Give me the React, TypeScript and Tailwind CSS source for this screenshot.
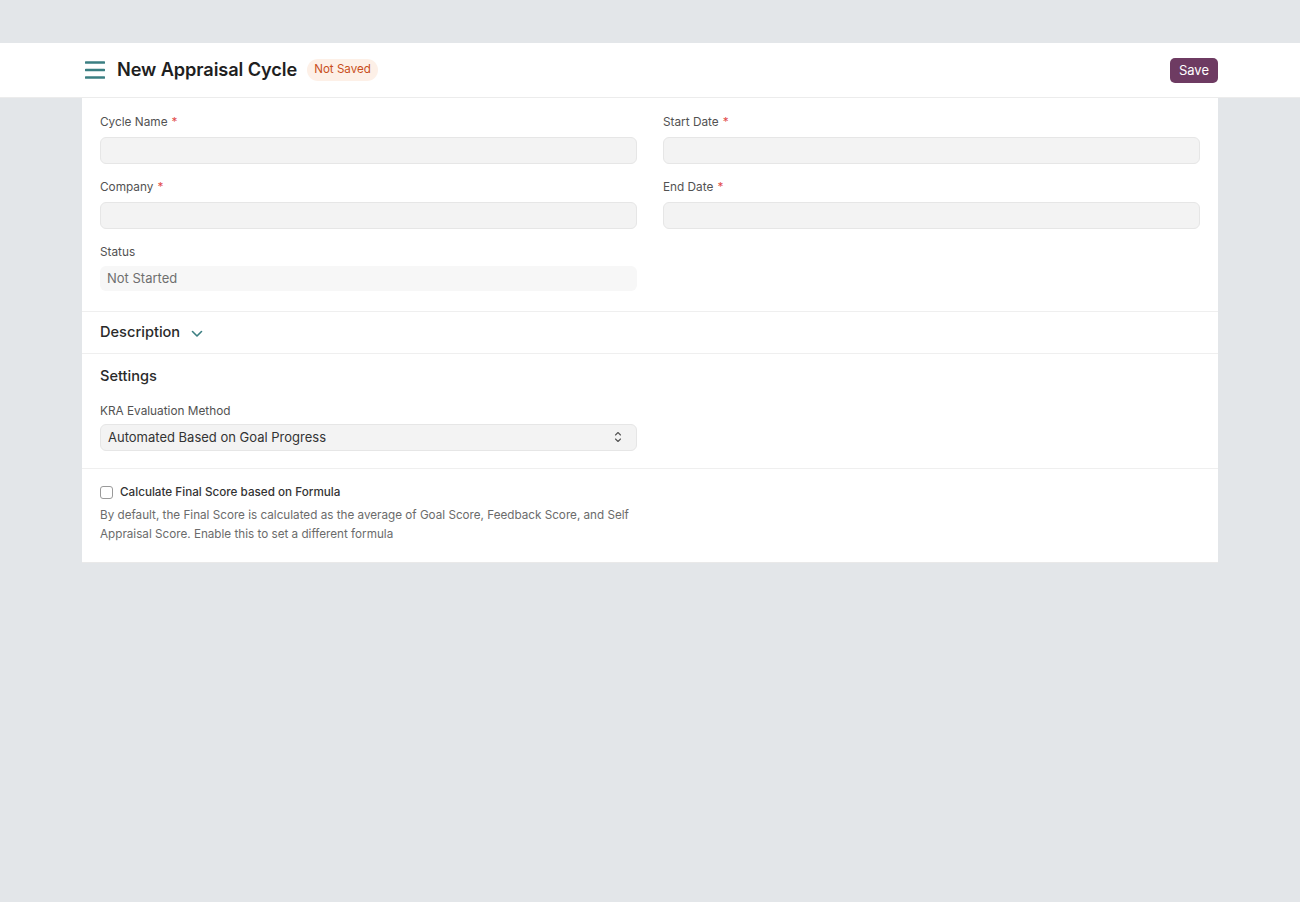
import React from 'react';

const font = { fontFamily: 'Inter, "Noto Sans", sans-serif' };

const Label = ({ text, required, tight }: { text: string; required?: boolean; tight?: boolean }) => (
  <div className={`text-[11.8px] text-[#525252] leading-none ${tight ? 'mb-[6px]' : 'mb-[8px]'}`}>
    {text}
    {required && <span className="text-[#e24c4c] ml-[4px]">*</span>}
  </div>
);

const Input = () => (
  <div className="h-[27px] rounded-[6px] bg-[#f3f3f3] border border-[#e6e6e6]" />
);

function MenuIcon() {
  return (
    <svg width="20" height="20" viewBox="0 0 20 20" fill="none">
      <path d="M1 2.5h18M1 10h18M1 17.5h18" stroke="#3b7f82" strokeWidth="2.6" strokeLinecap="round" />
    </svg>
  );
}

export default function App() {
  return (
    <div className="min-h-[902px] bg-[#e3e6e9] pt-[43px]" style={font}>
      <div className="bg-white border-b border-[#ececec] h-[55px]">
        <div className="w-[1136px] mx-auto h-full flex items-center justify-between">
          <div className="flex items-center">
            <div className="ml-[3px] mr-[12px] flex items-center">
              <MenuIcon />
            </div>
            <h1 className="text-[18.2px] font-semibold text-[#1f1f1f] tracking-[-0.1px]">New Appraisal Cycle</h1>
            <span className="ml-[10px] px-[7px] py-[2px] rounded-full bg-[#fdf0e7] text-[#c94f1c] text-[11.6px]">Not Saved</span>
          </div>
          <button className="h-[25px] px-[9px] rounded-[5px] bg-[#6e3b62] text-white text-[13px] leading-none">Save</button>
        </div>
      </div>

      <div className="w-[1136px] mx-auto bg-white">
        <div className="px-[18px] pt-[19px] pb-[20px] border-b border-[#efefef] grid grid-cols-2 gap-x-[26px]">
          <div className="flex flex-col gap-[18px]">
            <div>
              <Label text="Cycle Name" required />
              <Input />
            </div>
            <div>
              <Label text="Company" required />
              <Input />
            </div>
            <div>
              <Label text="Status" />
              <div className="h-[25px] rounded-[6px] bg-[#f7f7f7] px-[7px] flex items-center text-[13px] text-[#6f6f6f]">Not Started</div>
            </div>
          </div>
          <div className="flex flex-col gap-[18px]">
            <div>
              <Label text="Start Date" required />
              <Input />
            </div>
            <div>
              <Label text="End Date" required />
              <Input />
            </div>
          </div>
        </div>

        <div className="px-[18px] h-[42px] flex items-center border-b border-[#efefef]">
          <span className="text-[14.6px] font-medium text-[#2a2a2a]">Description</span>
          <svg className="ml-[11px] mt-[2px]" width="12" height="8" viewBox="0 0 12 8" fill="none">
            <path d="M1.5 1.5l4.5 4.5 4.5-4.5" stroke="#3b7f82" strokeWidth="1.6" strokeLinecap="round" strokeLinejoin="round" />
          </svg>
        </div>

        <div className="px-[18px] pt-[15px] pb-[17px] border-b border-[#efefef]">
          <div className="text-[14.6px] font-medium text-[#2a2a2a] leading-none mb-[22px]">Settings</div>
          <div className="w-[537px]">
            <Label text="KRA Evaluation Method" tight />
            <div className="h-[27px] rounded-[6px] bg-[#f3f3f3] border border-[#e6e6e6] px-[7px] flex items-center justify-between text-[13px] text-[#333]">
              <span>Automated Based on Goal Progress</span>
              <svg className="mr-[7px]" width="8" height="14" viewBox="0 0 8 14" fill="none">
                <path d="M1.5 5l2.5-2.5L6.5 5M1.5 9l2.5 2.5L6.5 9" stroke="#555" strokeWidth="1.1" strokeLinecap="round" strokeLinejoin="round" />
              </svg>
            </div>
          </div>
        </div>

        <div className="px-[18px] pt-[15px] pb-[18px] border-b border-[#e9e9e9]">
          <label className="flex items-center gap-[7px]">
            <span className="w-[13px] h-[13px] rounded-[3px] border border-[#9a9a9a] bg-white" />
            <span className="text-[11.7px] font-medium text-[#333]">Calculate Final Score based on Formula</span>
          </label>
          <p className="mt-[5px] w-[540px] text-[11.7px] leading-[19px] text-[#6b6b6b]">
            By default, the Final Score is calculated as the average of Goal Score, Feedback Score, and Self Appraisal Score. Enable this to set a different formula
          </p>
        </div>
      </div>
    </div>
  );
}
